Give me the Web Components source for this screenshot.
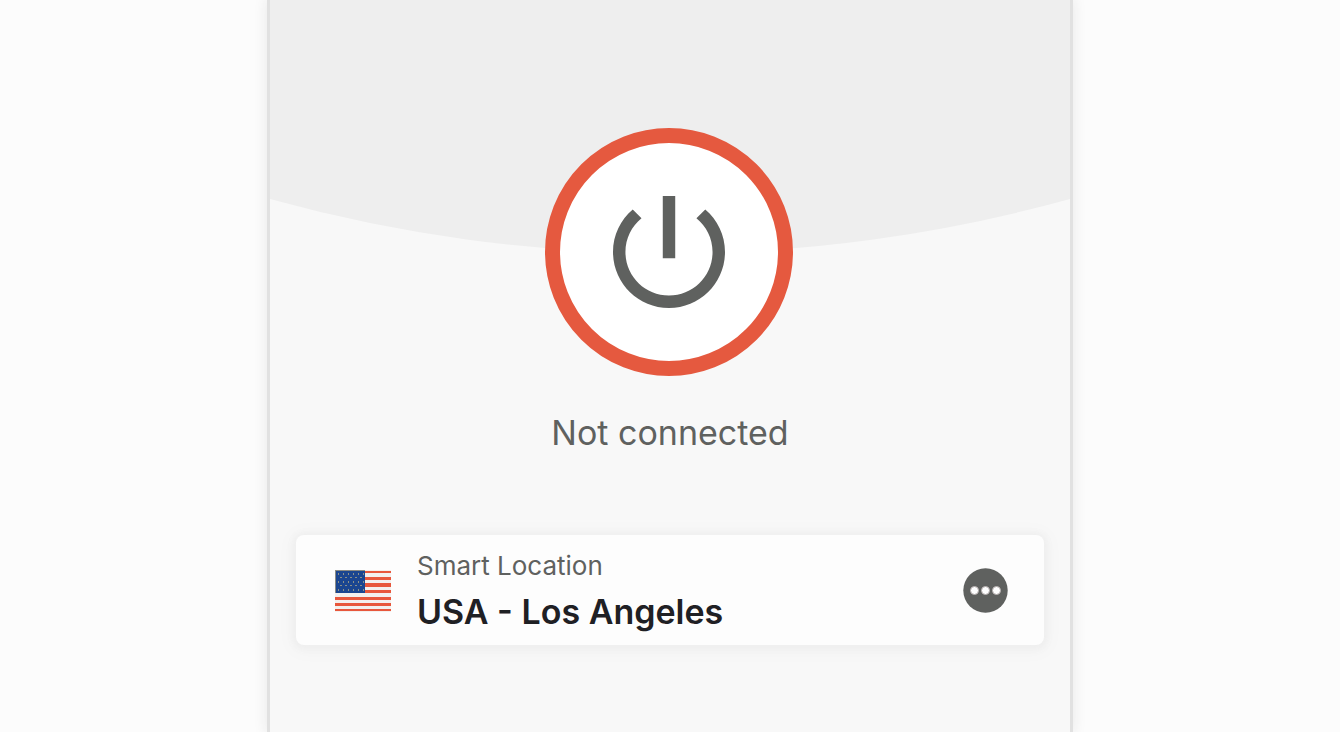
<!DOCTYPE html>
<html lang="en">
<head>
<meta charset="utf-8">
<meta name="viewport" content="width=device-width, initial-scale=1">
<title>VPN</title>
<style>
  html, body { margin: 0; min-height: 100%; }
  body { background: #fcfcfc; font-family: Inter, "Liberation Sans", sans-serif; color: #5f615f; }
</style>
</head>
<body>
<vpn-panel>
  <power-button></power-button>
  <connection-status>Not connected</connection-status>
  <location-card>
    <us-flag slot="flag"></us-flag>
    <span slot="label">Smart Location</span>
    <span slot="name">USA - Los Angeles</span>
  </location-card>
</vpn-panel>

<script>
const define = (name, html) => customElements.define(name, class extends HTMLElement {
  constructor() {
    super();
    this.attachShadow({ mode: 'open' }).innerHTML = html;
  }
});

define('vpn-panel', `
  <style>
    :host { display: block; }
    main {
      position: relative; box-sizing: border-box; overflow: hidden;
      width: 100%; max-width: 800px; min-height: 100vh; margin: 0 auto;
      padding: 128px 26px 40px;
      display: flex; flex-direction: column; align-items: center;
      background: #f8f8f8;
    }
    .frame { box-shadow: 0 0 0 3px #e1e1e1, 0 0 14px 2px #e4e4e4; max-width: 800px; margin: 0 auto; }
    .dome { position: absolute; top: 0; left: 0; width: 100%; height: 254px; }
    ::slotted(*) { position: relative; }
  </style>
  <div class="frame"><main>
    <svg class="dome" viewBox="0 0 800 254" preserveAspectRatio="none" aria-hidden="true">
      <path d="M0 0H800V199A1500 1500 0 0 1 0 199Z" fill="#eeeeee"/>
    </svg>
    <slot></slot>
  </main></div>`);

define('power-button', `
  <style>
    :host { display: block; margin-right: 2px; }
    button {
      display: grid; place-items: center; box-sizing: border-box;
      width: 248px; height: 248px; padding: 0; border: 15px solid #e5593f; border-radius: 50%;
      background: #fff; color: #5f615f; cursor: pointer;
    }
    svg { width: 112px; height: 112px; }
  </style>
  <button type="button" aria-label="Connect">
    <svg viewBox="3 3 18 18" fill="currentColor" aria-hidden="true">
      <path d="M13 3h-2v10h2V3zm4.83 2.17l-1.42 1.42C17.99 7.86 19 9.81 19 12c0 3.87-3.13 7-7 7s-7-3.13-7-7c0-2.19 1.01-4.14 2.58-5.42L6.17 5.17C4.23 6.82 3 9.26 3 12c0 4.97 4.03 9 9 9s9-4.03 9-9c0-2.74-1.23-5.18-3.17-6.83z"/>
    </svg>
  </button>`);

define('connection-status', `
  <style>
    :host { display: block; margin: 36px 0 81px; font-size: 34px; line-height: 42px; }
  </style>
  <slot></slot>`);

define('us-flag', `
  <style>
    :host { display: block; width: 56px; height: 42px; }
    svg { display: block; width: 100%; height: 100%; }
  </style>
  <svg viewBox="0 0 56 42" role="img" aria-label="USA">
    <defs><pattern id="stars" x="3" y="3" width="5" height="8" patternUnits="userSpaceOnUse">
      <path d="M0 0h1v2h-1zM2 4h2v1h-2z" fill="#8d9187"/>
    </pattern></defs>
    <path fill="#f3f0ee" d="M0 0h56v42H0z"/>
    <path fill="#e8573c" d="M0 1h56v2H0zM0 7h56v3H0zM0 13h56v4H0zM0 20h56v3H0zM0 27h56v3H0zM0 33h56v3H0zM0 39h56v2H0z"/>
    <path fill="#1b4690" d="M0 0h30v23H0z"/>
    <path fill="url(#stars)" d="M3 3h26v18H3z"/>
    <path fill="#8b8c84" d="M0 0h30v1H0zM0 1h1v22H0z"/>
  </svg>`);

define('location-card', `
  <style>
    :host { display: block; align-self: stretch; }
    section {
      display: flex; align-items: center; box-sizing: border-box;
      min-height: 110px; padding: 0 36px 0 39px; border-radius: 8px;
      background: #fdfdfd; box-shadow: 0 1px 6px 3px #efefef, 0 2px 16px 3px #f0f0f0;
    }
    .flag { padding-top: 2px; }
    .text { flex: 1; margin-left: 26px; padding-top: 4px; }
    .label { font-size: 26px; line-height: 32px; margin-bottom: 8px; }
    .name { font-size: 34px; line-height: 44px; font-weight: 600; color: #1f2024; }
    button { padding: 0; border: 0; border-radius: 50%; background: none; cursor: pointer; }
    button svg { display: block; width: 45px; height: 45px; }
  </style>
  <section>
    <div class="flag"><slot name="flag"></slot></div>
    <div class="text">
      <div class="label"><slot name="label"></slot></div>
      <div class="name"><slot name="name"></slot></div>
    </div>
    <button type="button" aria-label="More locations">
      <svg viewBox="0 0 45 45" aria-hidden="true">
        <circle cx="22.5" cy="22.5" r="22.2" fill="#5f615f"/>
        <g fill="#fff" stroke="#b5aeae" stroke-width="1"><circle cx="11.5" cy="22.5" r="4"/><circle cx="22.5" cy="22.5" r="4"/><circle cx="33.5" cy="22.5" r="4"/></g>
      </svg>
    </button>
  </section>`);
</script>
</body>
</html>
